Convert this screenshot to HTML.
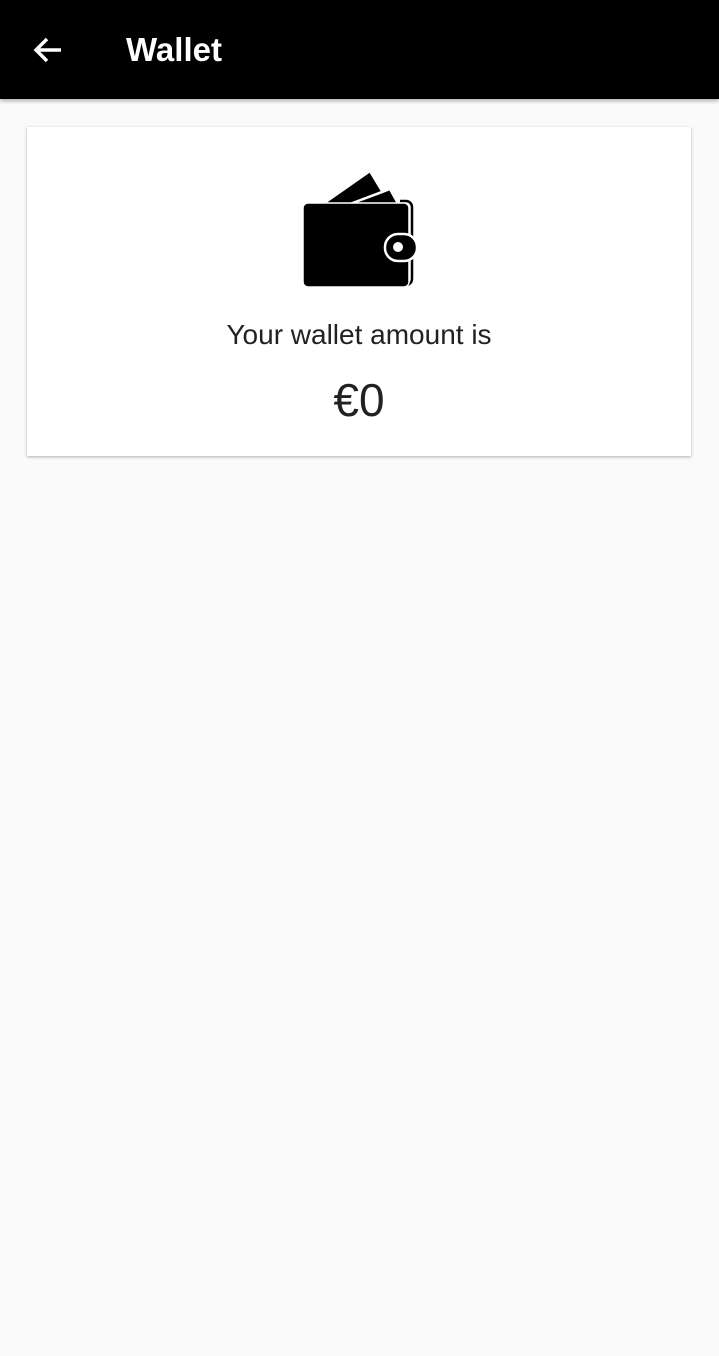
<!DOCTYPE html>
<html><head><meta charset="utf-8"><style>
html,body{margin:0;padding:0}
body{width:719px;height:1356px;background:#fafafa;font-family:"Liberation Sans",sans-serif;position:relative;overflow:hidden}
.bar{position:absolute;left:0;top:0;width:719px;height:99px;background:#000;box-shadow:0 2px 4px rgba(0,0,0,.3)}
.bar h1{position:absolute;left:126px;top:30px;margin:0;color:#fff;font-size:33px;font-weight:bold;line-height:40px}
.back{position:absolute;left:32px;top:34px}
.card{position:absolute;left:27px;top:127px;width:664px;height:329px;background:#fff;box-shadow:0 1px 3px rgba(0,0,0,.3)}
.t1{position:absolute;left:0;width:664px;text-align:center;top:190px;font-size:28px;color:#222;line-height:36px}
.t2{position:absolute;left:0;width:664px;text-align:center;top:245px;font-size:46px;color:#222;line-height:56px}
</style></head><body>
<div class="bar">
<svg class="back" width="32" height="32" viewBox="0 0 32 32"><path d="M29 16H5M15 5L4 16l11 11" stroke="#fff" stroke-width="3.4" fill="none"/></svg>
<h1>Wallet</h1>
</div>
<div class="card">
<svg style="position:absolute;left:269px;top:38px" width="120" height="125" viewBox="296 165 120 125">
<polygon points="320,206 370,171 388,201 342,207" fill="#000" stroke="#fff" stroke-width="2.5" stroke-linejoin="round"/>
<polygon points="342,207 390,189 400,207" fill="#000" stroke="#fff" stroke-width="2.5" stroke-linejoin="round"/>
<path d="M400 201 h6 a6 6 0 0 1 6 6 v72 a6 6 0 0 1 -6 6" fill="none" stroke="#000" stroke-width="2.5"/>
<rect x="303" y="203" width="106" height="84" rx="5" fill="#000" stroke="#fff" stroke-width="1.5"/>
<rect x="385" y="234" width="32" height="27" rx="13" fill="#000" stroke="#fff" stroke-width="2.5"/>
<circle cx="398" cy="247" r="5" fill="#fff"/>
</svg>
<div class="t1">Your wallet amount is</div>
<div class="t2">€0</div>
</div>
</body></html>
